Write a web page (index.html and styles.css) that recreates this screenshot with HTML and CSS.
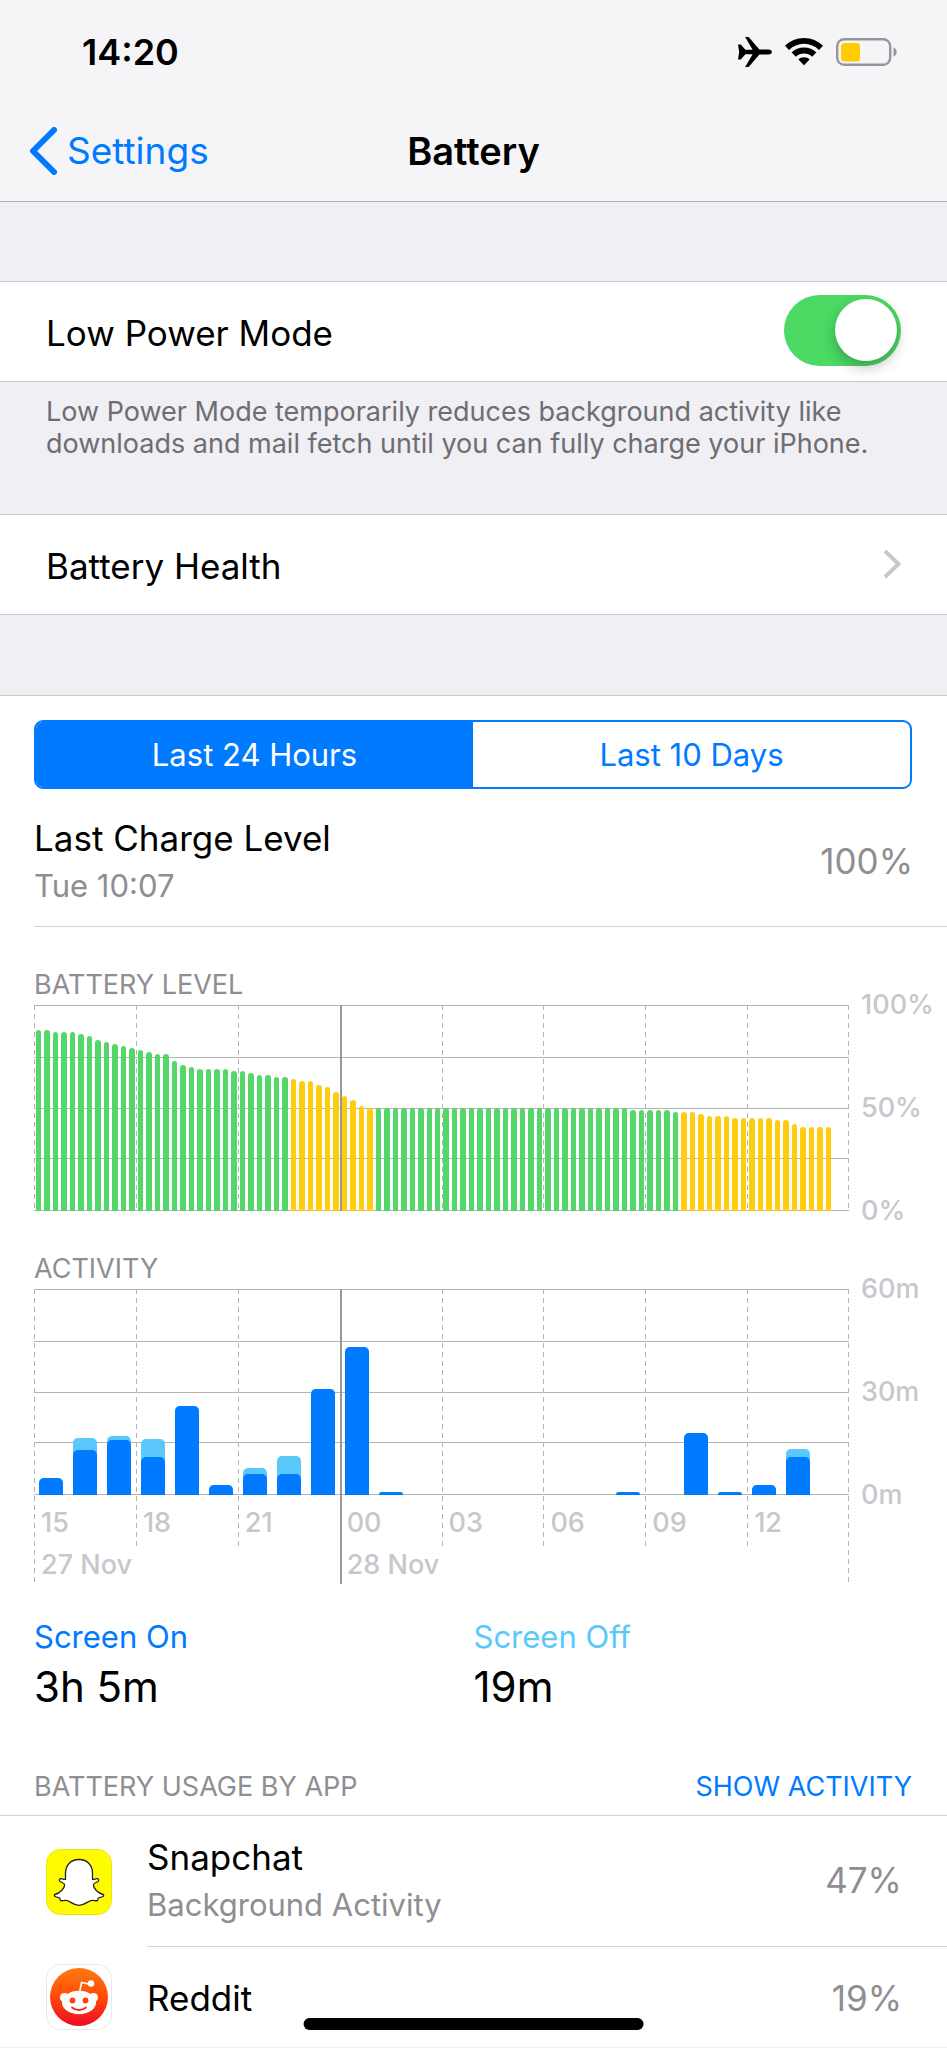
FILE: index.html
```html
<!DOCTYPE html>
<html lang="en">
<head>
    <meta charset="UTF-8">
    <meta name="viewport" content="width=device-width, initial-scale=1.0">
    <title>Battery</title>
    <link rel="stylesheet" href="styles.css">
</head>
<body>
    <header>
        <div class="status-bar">
            <span class="time">14:20</span>
            <div class="status-icons">
                <svg width="34" height="30" viewBox="0 0 34 30">
                    <path d="M0 7.5h2.8l4.6 5.3h7.2L7.2 0h3.4l10.8 12.4h9.2c4.4 0 4.4 5.2 0 5.2h-9.2L10.6 30H7.2l7.4-12.8H7.4l-4.6 5.3H0L1.2 15z"/>
                </svg>
                <svg width="38" height="28" viewBox="0 0 38 28">
                    <path d="M19 0c7.400 0 14 2.900 19 7.700l-4 4.200C30 8.100 24.800 5.800 19 5.800S8 8.100 4 11.900L0 7.700C5 2.900 11.600 0 19 0z"/>
                    <path d="M19 9.600c4.800 0 9.100 1.900 12.300 4.900l-4.200 4.200c-2.100-2-5-3.200-8.100-3.200s-6 1.200-8.100 3.200l-4.200-4.200c3.200-3 7.500-4.900 12.300-4.900z"/>
                    <path d="M19 19.200c2.200 0 4.200.9 5.600 2.200L19 27.200l-5.600-5.800c1.400-1.300 3.400-2.200 5.600-2.200z"/>
                </svg>
                <svg width="62" height="28" viewBox="0 0 62 28">
                    <rect x="1.200" y="1.200" width="53" height="25.600" rx="7" fill="none" stroke="#97979b" stroke-width="2.400"/>
                    <rect x="5" y="5" width="19" height="18.500" rx="3.500" fill="#ffcc00"/>
                    <path d="M57.500 9.500c4.200 1.200 4.200 7.800 0 9z" fill="#97979b"/>
                </svg>
            </div>
        </div>
        <nav>
            <a href="#" class="back">
                <svg width="28" height="48" viewBox="0 0 28 48">
                    <path d="M25 3L4 24l21 21" fill="none" stroke="#007aff" stroke-width="6" stroke-linecap="round" stroke-linejoin="round"/>
                </svg>
                Settings
            </a>
            <h1>Battery</h1>
        </nav>
    </header>

    <main>
        <div class="row">
            <label for="low-power">Low Power Mode</label>
            <input type="checkbox" id="low-power" class="switch" checked>
        </div>
        <p class="note">Low Power Mode temporarily reduces background activity like downloads and mail fetch until you can fully charge your iPhone.</p>

        <a href="#" class="row">
            <span>Battery Health</span>
            <svg width="18" height="30" viewBox="0 0 18 30">
                <path d="M2 1l13.500 13L2 27" fill="none" stroke="#c7c7cc" stroke-width="4"/>
            </svg>
        </a>

        <section class="panel">
            <div class="segments">
                <button type="button" class="active">Last 24 Hours</button>
                <button type="button">Last 10 Days</button>
            </div>

            <div class="charge">
                <div class="titles">
                    <h2>Last Charge Level</h2>
                    <p>Tue 10:07</p>
                </div>
                <span class="value">100%</span>
            </div>

            <h3>BATTERY LEVEL</h3>
            <div class="chart">
                <div class="plot level">
                    <div class="lines"></div>
                    <i class="tick"></i>
                    <i class="tick"></i>
                    <i class="tick"></i>
                    <i class="tick midnight"></i>
                    <i class="tick"></i>
                    <i class="tick"></i>
                    <i class="tick"></i>
                    <i class="tick"></i>
                    <i class="tick end"></i>
                    <div class="bars" id="level-bars"></div>
                </div>
                <div class="axis"><span>100%</span><span>50%</span><span>0%</span></div>
            </div>

            <h3>ACTIVITY</h3>
            <div class="chart">
                <div class="plot activity">
                    <div class="lines"></div>
                    <i class="tick long"></i>
                    <i class="tick"></i>
                    <i class="tick"></i>
                    <i class="tick midnight long"></i>
                    <i class="tick"></i>
                    <i class="tick"></i>
                    <i class="tick"></i>
                    <i class="tick"></i>
                    <i class="tick end long"></i>
                    <div class="bars" id="activity-bars"></div>
                    <div class="hours">
                        <span>15</span>
                        <span>18</span>
                        <span>21</span>
                        <span>00</span>
                        <span>03</span>
                        <span>06</span>
                        <span>09</span>
                        <span>12</span>
                    </div>
                    <span class="date">27 Nov</span>
                    <span class="date">28 Nov</span>
                </div>
                <div class="axis"><span>60m</span><span>30m</span><span>0m</span></div>
            </div>

            <dl class="totals">
                <div>
                    <dt class="on">Screen On</dt>
                    <dd>3h 5m</dd>
                </div>
                <div>
                    <dt class="off">Screen Off</dt>
                    <dd>19m</dd>
                </div>
            </dl>

            <div class="usage-head">
                <h3>BATTERY USAGE BY APP</h3>
                <button type="button">SHOW ACTIVITY</button>
            </div>

            <ul class="apps">
                <li>
                    <svg width="66" height="66" viewBox="0 0 66 66">
                        <rect x=".5" y=".5" width="65" height="65" rx="14" fill="#fffc00" stroke="#e8e51a"/>
                        <path d="M33 10.500c8.500 0 13.500 6 13.500 13.500v6.300c1.500.5 3.300-1 4.900-.6 1.700.5 1.600 2.300.3 3-1.500.8-4.200 1.300-4.300 3.200 0 3.400 4.400 8.300 9.700 9.600.8.200.6 1.600-.1 2-1.600.9-4 1-4.700 1.600-.6.600-.2 2.400-1.100 2.600-1.700.3-4-.7-6.500-.1-3.300.8-5.700 4.700-11.700 4.700s-8.400-3.900-11.700-4.700c-2.500-.6-4.800.4-6.500.1-.9-.2-.5-2-1.100-2.600-.7-.6-3.100-.7-4.700-1.600-.7-.4-.9-1.800-.1-2 5.300-1.300 9.700-6.200 9.700-9.600-.1-1.900-2.800-2.400-4.300-3.200-1.300-.7-1.400-2.500.3-3 1.600-.4 3.400 1.100 4.900.6V24c0-7.500 5-13.500 13.500-13.500z" fill="#fff" stroke="#222" stroke-width="1.300"/>
                    </svg>
                    <div class="app">
                        <div class="titles">
                            <h2>Snapchat</h2>
                            <p>Background Activity</p>
                        </div>
                        <span class="value">47%</span>
                    </div>
                </li>
                <li>
                    <svg width="66" height="66" viewBox="0 0 66 66">
                        <defs>
                            <linearGradient id="reddit" x1="0" y1="0" x2="0" y2="1">
                                <stop offset="0" stop-color="#ff7a10"/>
                                <stop offset=".5" stop-color="#ff4a0a"/>
                                <stop offset="1" stop-color="#ee0a26"/>
                            </linearGradient>
                        </defs>
                        <rect x=".5" y=".5" width="65" height="65" rx="14" fill="#fff" stroke="#e9e9eb"/>
                        <circle cx="33" cy="33" r="29" fill="url(#reddit)"/>
                        <path d="M33.500 29l2-10.500 8 1.600" fill="none" stroke="#fff" stroke-width="1.600" stroke-linejoin="round"/>
                        <g fill="#fff">
                            <circle cx="45" cy="19.500" r="3.200"/>
                            <circle cx="18.500" cy="33.500" r="4.500"/>
                            <circle cx="47.500" cy="33.500" r="4.500"/>
                            <ellipse cx="33" cy="38.500" rx="17" ry="11.800"/>
                        </g>
                        <circle cx="26.500" cy="36.500" r="2.900" fill="#ff4008"/>
                        <circle cx="39.500" cy="36.500" r="2.900" fill="#ff4008"/>
                        <path d="M26 43.500c3.500 3.300 10.500 3.300 14 0" fill="none" stroke="#f8281a" stroke-width="1.800" stroke-linecap="round"/>
                    </svg>
                    <div class="app">
                        <div class="titles">
                            <h2>Reddit</h2>
                        </div>
                        <span class="value">19%</span>
                    </div>
                </li>
            </ul>
        </section>
    </main>

    <div class="home-indicator"></div>

    <script src="script.js"></script>
</body>
</html>
```
FILE: styles.css
```css
* {
    margin: 0;
    padding: 0;
    box-sizing: border-box;
}

body {
    font-family: Inter, "Liberation Sans", sans-serif;
    font-size: 35px;
    line-height: 44px;
    background: #efeff4;
    color: #000;
}

a {
    color: inherit;
    text-decoration: none;
}

svg {
    display: block;
    flex-shrink: 0;
}

button {
    font: inherit;
    background: none;
    border: none;
    cursor: pointer;
}

/* Status bar and navigation */
header {
    background: #f5f5f7;
    border-bottom: 1px solid #b2b2b6;
    padding-bottom: 3px;
    margin-bottom: 79px;
}

.status-bar {
    display: flex;
    align-items: center;
    justify-content: space-between;
    height: 104px;
    padding: 0 49px 0 82px;
}

.time {
    font-size: 36px;
    font-weight: 600;
}

.status-icons {
    display: flex;
    align-items: center;
    gap: 13px;
}

nav {
    display: grid;
    grid-template-columns: 1fr auto 1fr;
    align-items: center;
    height: 94px;
    padding: 0 29px;
    font-size: 37px;
}

.back {
    display: flex;
    align-items: center;
    gap: 10px;
    color: #007aff;
}

h1 {
    font-size: 38px;
    font-weight: 600;
}

/* Settings rows */
.row {
    display: flex;
    align-items: center;
    justify-content: space-between;
    height: 101px;
    padding: 0 46px;
    background: #fff;
    border-top: 1px solid #c8c7cc;
    border-bottom: 1px solid #c8c7cc;
}

.row label,
.row span {
    padding-top: 3px;
}

.switch {
    appearance: none;
    width: 117px;
    height: 71px;
    margin-bottom: 2px;
    padding: 4px;
    border-radius: 36px;
    background: #d8d8dc;
    cursor: pointer;
}

.switch::before {
    content: "";
    display: block;
    width: 62px;
    height: 62px;
    border-radius: 50%;
    background: #fff;
    box-shadow: 0 6px 14px rgba(0, 0, 0, 0.25);
}

.switch:checked {
    background: #4cd964;
}

.switch:checked::before {
    margin-left: auto;
}

.note {
    padding: 14px 46px 54px;
    font-size: 27px;
    line-height: 32px;
    color: #6d6d72;
}

/* Main panel */
.panel {
    margin-top: 80px;
    padding-top: 24px;
    background: #fff;
    border-top: 1px solid #c8c7cc;
}

.segments {
    display: flex;
    margin: 0 35px 0 34px;
    border: 2px solid #007aff;
    border-radius: 9px;
    overflow: hidden;
}

.segments button {
    flex: 1;
    height: 65px;
    font-size: 31px;
    color: #007aff;
}

.segments .active {
    background: #007aff;
    color: #fff;
}

.charge {
    display: flex;
    align-items: center;
    justify-content: space-between;
    margin-left: 34px;
    padding: 27px 34px 20px 0;
    border-bottom: 1px solid #d4d4d8;
}

.titles {
    display: flex;
    flex-direction: column;
    gap: 6px;
}

h2 {
    font-size: 35px;
    font-weight: 400;
}

.titles p {
    font-size: 31px;
    line-height: 40px;
    color: #8e8e93;
}

.value {
    color: #8e8e93;
}

h3 {
    font-size: 27px;
    line-height: 32px;
    font-weight: 400;
    color: #8e8e93;
}

/* Charts */
.panel > h3 {
    margin: 42px 34px 4px;
}

.chart {
    display: flex;
    padding-left: 34px;
}

.plot {
    flex: 1;
    display: grid;
    grid-template-columns: repeat(8, 1fr);
    grid-template-rows: 206px;
}

.activity {
    grid-template-rows: 206px 52px 37px;
}

.lines {
    grid-area: 1 / 1 / 2 / -1;
    border-top: 1px solid #b4b4b7;
    border-bottom: 1px solid #b4b4b7;
    background:
        linear-gradient(#b4b4b7, #b4b4b7) 0 25% / 100% 1px no-repeat,
        linear-gradient(#b4b4b7, #b4b4b7) 0 50% / 100% 1px no-repeat,
        linear-gradient(#b4b4b7, #b4b4b7) 0 75% / 100% 1px no-repeat;
}

.tick {
    grid-row: 1 / 2;
    width: 1px;
    background: repeating-linear-gradient(#b4b4b7 0 5px, transparent 5px 9px);
}

.activity .tick {
    grid-row: 1 / 3;
}

.activity .long {
    grid-row: 1 / 4;
}

.tick.midnight {
    width: 2px;
    background: #97979b;
}

.tick:nth-of-type(1) { grid-column: 1; }
.tick:nth-of-type(2) { grid-column: 2; }
.tick:nth-of-type(3) { grid-column: 3; }
.tick:nth-of-type(4) { grid-column: 4; }
.tick:nth-of-type(5) { grid-column: 5; }
.tick:nth-of-type(6) { grid-column: 6; }
.tick:nth-of-type(7) { grid-column: 7; }
.tick:nth-of-type(8) { grid-column: 8; }

.tick.end {
    grid-column: 8;
    justify-self: end;
}

.bars {
    grid-area: 1 / 1 / 2 / -1;
    display: grid;
    align-items: end;
}

#level-bars {
    grid-template-columns: repeat(96, 1fr);
}

#level-bars i {
    margin: 0 1px 0 2px;
    border-radius: 3px 3px 0 0;
    background: #53d769;
}

#level-bars .low {
    background: #ffcc10;
}

#activity-bars {
    grid-template-columns: repeat(24, 1fr);
}

.hourly {
    display: flex;
    align-items: flex-end;
    margin: 0 5px;
    border-radius: 5px 5px 0 0;
    background: #5ac8fa;
}

.hourly i {
    flex: 1;
    border-radius: 5px 5px 0 0;
    background: #007aff;
}

.hours,
.date,
.axis {
    font-size: 27px;
    font-weight: 500;
    line-height: 32px;
    color: #c7c7cc;
}

.hours {
    grid-area: 2 / 1 / 3 / -1;
    display: grid;
    grid-template-columns: repeat(8, 1fr);
    padding-top: 12px;
}

.hours span,
.date {
    padding-left: 7px;
}

.date {
    grid-row: 3;
    grid-column: 1 / 4;
    padding-top: 2px;
}

.date:last-child {
    grid-column: 4 / 7;
}

.axis {
    display: flex;
    flex-direction: column;
    justify-content: space-between;
    width: 98px;
    height: 238px;
    margin: -16px 0;
    padding-left: 12px;
}

/* Screen on / off totals */
.totals {
    display: grid;
    grid-template-columns: 1fr 1fr;
    margin: 33px 34px 0;
}

dt {
    margin-bottom: 4px;
    font-size: 31px;
    line-height: 40px;
}

dd {
    font-size: 42px;
    line-height: 52px;
}

.on {
    color: #007aff;
}

.off {
    color: #5ac8fa;
}

/* Usage list */
.usage-head {
    display: flex;
    justify-content: space-between;
    margin-top: 58px;
    padding: 0 35px 12px 34px;
    border-bottom: 1px solid #d4d4d8;
}

.usage-head button {
    font-size: 27px;
    line-height: 32px;
    color: #007aff;
}

.apps {
    list-style: none;
}

.apps li {
    display: flex;
    align-items: center;
    gap: 35px;
    padding-left: 46px;
}

.app {
    flex: 1;
    display: flex;
    align-items: center;
    justify-content: space-between;
    min-height: 100px;
    padding: 19px 45px 21px 0;
}

li:not(:last-child) .app {
    border-bottom: 1px solid #d4d4d8;
}

li:last-child .app {
    padding: 2px 45px 0 0;
}

.home-indicator {
    position: fixed;
    bottom: 18px;
    left: 50%;
    width: 36%;
    height: 12px;
    border-radius: 6px;
    background: #000;
    transform: translateX(-50%);
}
```
FILE: script.js
```js
// battery percentage, one reading every 15 minutes
const levels = [
    88, 88, 87, 87, 87, 86, 85, 83, 82, 81, 80, 79, 78, 77, 76, 76,
    73, 71, 70, 69, 69, 69, 69, 68, 68, 67, 66, 66, 65, 65, 64, 63,
    63, 61, 60, 58, 56, 54, 51, 50, 50, 50, 50, 50, 50, 50, 50, 50,
    50, 50, 50, 50, 50, 50, 50, 50, 50, 50, 50, 50, 50, 50, 50, 50,
    50, 50, 50, 50, 50, 50, 49, 49, 49, 49, 49, 48, 48, 48, 47, 46,
    46, 46, 45, 45, 45, 45, 45, 44, 44, 42, 41, 41, 41, 41
];

// minutes per hour: [screen on, total]
const activity = [
    [5, 5], [13, 16.5], [16, 17.3], [11, 16.4], [26, 26], [3, 3],
    [6, 8], [6, 11.4], [31, 31], [43, 43], [1, 1], [0, 0],
    [0, 0], [0, 0], [0, 0], [0, 0], [0, 0], [1, 1],
    [0, 0], [18, 18], [1, 1], [3, 3], [11, 13.4], [0, 0]
];

const levelBars = document.getElementById('level-bars');
levels.forEach((level, i) => {
    const bar = document.createElement('i');
    bar.style.height = level + '%';
    // low power mode was on
    if ((i >= 30 && i < 40) || i >= 76) {
        bar.className = 'low';
    }
    levelBars.appendChild(bar);
});

const activityBars = document.getElementById('activity-bars');
activity.forEach(([on, total]) => {
    const bar = document.createElement('div');
    bar.className = 'hourly';
    bar.style.height = total / 60 * 100 + '%';
    if (total) {
        const screenOn = document.createElement('i');
        screenOn.style.height = on / total * 100 + '%';
        bar.appendChild(screenOn);
    }
    activityBars.appendChild(bar);
});
```
